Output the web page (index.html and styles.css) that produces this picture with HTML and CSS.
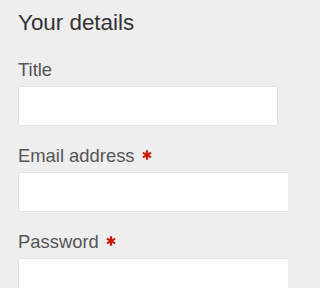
FILE: index.html
```html
<!DOCTYPE html>
<html>
<head>
<meta charset="utf-8">
<link rel="stylesheet" href="styles.css">
</head>
<body>
<div class="form">
  <h2 class="heading">Your details</h2>
  <div class="field">
    <label class="label">Title</label>
    <input class="input input-short" type="text">
  </div>
  <div class="field">
    <label class="label">Email address <svg class="req" viewBox="0 0 10 10" width="10" height="10"><g stroke="#c8180c" stroke-width="2.2" stroke-linecap="butt"><line x1="5" y1="0.3" x2="5" y2="9.7"/><line x1="0.9" y1="2.6" x2="9.1" y2="7.4"/><line x1="0.9" y1="7.4" x2="9.1" y2="2.6"/></g></svg></label>
    <input class="input" type="email">
  </div>
  <div class="field">
    <label class="label">Password <svg class="req" viewBox="0 0 10 10" width="10" height="10"><g stroke="#c8180c" stroke-width="2.2" stroke-linecap="butt"><line x1="5" y1="0.3" x2="5" y2="9.7"/><line x1="0.9" y1="2.6" x2="9.1" y2="7.4"/><line x1="0.9" y1="7.4" x2="9.1" y2="2.6"/></g></svg></label>
    <input class="input" type="password">
  </div>
</div>
</body>
</html>
```
FILE: styles.css
```css
html, body {
  margin: 0;
  padding: 0;
  background: #eeeeee;
  overflow: hidden;
}
body {
  font-family: "Liberation Sans", Arial, sans-serif;
  width: 288px;
  height: 288px;
}
.form {
  box-sizing: border-box;
  width: 288px;
  height: 288px;
  overflow: hidden;
  padding: 10px 0 0 18px;
  display: flex;
  flex-direction: column;
}
.heading {
  margin: 0 0 23px 0;
  font-size: 22.4px;
  line-height: 26px;
  font-weight: normal;
  color: #333333;
}
.field {
  display: flex;
  flex-direction: column;
  flex-shrink: 0;
  margin-bottom: 19px;
}
.label {
  display: flex;
  align-items: center;
  gap: 7px;
  font-size: 18.4px;
  line-height: 22px;
  color: #555555;
  margin-bottom: 5px;
}
.req {
  margin-top: -3px;
}
.input {
  box-sizing: border-box;
  width: 290px;
  height: 40px;
  flex-shrink: 0;
  margin: 0;
  background: #ffffff;
  border: 1px solid #e2e2e2;
  border-radius: 3px;
  outline: none;
}
.input-short {
  width: 260px;
}
```
